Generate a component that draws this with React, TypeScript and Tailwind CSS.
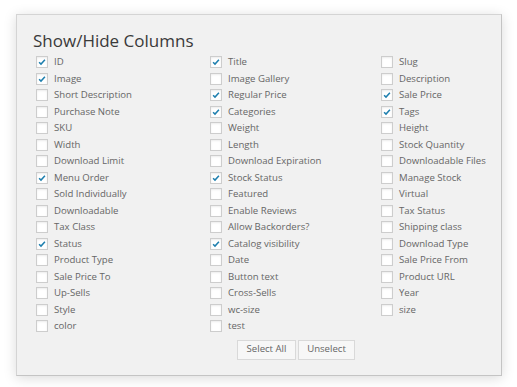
const columns: { label: string; checked?: boolean }[][] = [
  [
    { label: "ID", checked: true },
    { label: "Image", checked: true },
    { label: "Short Description" },
    { label: "Purchase Note" },
    { label: "SKU" },
    { label: "Width" },
    { label: "Download Limit" },
    { label: "Menu Order", checked: true },
    { label: "Sold Individually" },
    { label: "Downloadable" },
    { label: "Tax Class" },
    { label: "Status", checked: true },
    { label: "Product Type" },
    { label: "Sale Price To" },
    { label: "Up-Sells" },
    { label: "Style" },
    { label: "color" },
  ],
  [
    { label: "Title", checked: true },
    { label: "Image Gallery" },
    { label: "Regular Price", checked: true },
    { label: "Categories", checked: true },
    { label: "Weight" },
    { label: "Length" },
    { label: "Download Expiration" },
    { label: "Stock Status", checked: true },
    { label: "Featured" },
    { label: "Enable Reviews" },
    { label: "Allow Backorders?" },
    { label: "Catalog visibility", checked: true },
    { label: "Date" },
    { label: "Button text" },
    { label: "Cross-Sells" },
    { label: "wc-size" },
    { label: "test" },
  ],
  [
    { label: "Slug" },
    { label: "Description" },
    { label: "Sale Price", checked: true },
    { label: "Tags", checked: true },
    { label: "Height" },
    { label: "Stock Quantity" },
    { label: "Downloadable Files" },
    { label: "Manage Stock" },
    { label: "Virtual" },
    { label: "Tax Status" },
    { label: "Shipping class" },
    { label: "Download Type" },
    { label: "Sale Price From" },
    { label: "Product URL" },
    { label: "Year" },
    { label: "size" },
  ],
]

function Check({ label, checked }: { label: string; checked?: boolean }) {
  return (
    <div className="flex items-center h-[16.5px]">
      <span className="w-[12px] h-[12px] bg-white border border-[#cdcdcd] shadow-[inset_0_1px_2px_rgba(0,0,0,0.08)] flex items-center justify-center">
        {checked && (
          <svg viewBox="0 0 12 12" className="w-[10px] h-[10px]">
            <path d="M2.5 6.2 L4.8 8.5 L9.5 3.2" fill="none" stroke="#1e7fae" strokeWidth="1.8" />
          </svg>
        )}
      </span>
      <span className="ml-[6px] text-[9.6px] text-[#666] leading-none whitespace-nowrap">{label}</span>
    </div>
  )
}

export default function App() {
  return (
    <div className="w-[517px] h-[387px] bg-white pt-[14px] pl-[16px] font-['Open_Sans',sans-serif]">
      <div className="w-[486px] h-[362px] bg-[#f1f1f1] border border-[#d4d4d4] border-r-[#c4c4c4] border-b-[#c4c4c4] shadow-[0_2px_12px_rgba(0,0,0,0.15)] pl-[19px] pt-[13px]">
        <h2 className="text-[17px] text-[#3a3a3a] leading-[26px] ml-[-3px]">Show/Hide Columns</h2>
        <div className="grid grid-cols-[174px_171px_1fr]">
          {columns.map((col, i) => (
            <div key={i} className="flex flex-col">
              {col.map((c) => (
                <Check key={c.label} label={c.label} checked={c.checked} />
              ))}
            </div>
          ))}
        </div>
        <div className="flex gap-[2px] ml-[201px] mt-[5px]">
          <button className="h-[20px] w-[59px] bg-[#f7f7f7] border border-[#d9d9d9] text-[9.6px] text-[#666]">Select All</button>
          <button className="h-[20px] w-[57px] bg-[#f7f7f7] border border-[#d9d9d9] text-[9.6px] text-[#666]">Unselect</button>
        </div>
      </div>
    </div>
  )
}
